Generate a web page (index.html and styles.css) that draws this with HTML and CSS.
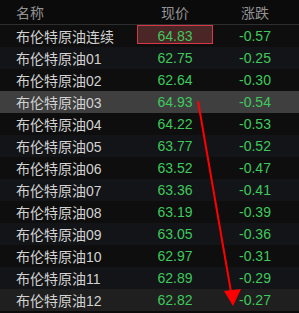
FILE: index.html
```html
<!DOCTYPE html>
<html>
<head>
<meta charset="utf-8">
<link rel="stylesheet" href="styles.css">
</head>
<body>
<div class="table">
  <div class="row head">
    <div class="name">名称</div><div class="price">现价</div><div class="chg">涨跌</div>
  </div>
  <div class="row odd"><div class="name">布伦特原油连续</div><div class="price boxed">64.83</div><div class="chg">-0.57</div></div>
  <div class="row even"><div class="name">布伦特原油01</div><div class="price">62.75</div><div class="chg">-0.25</div></div>
  <div class="row odd"><div class="name">布伦特原油02</div><div class="price">62.64</div><div class="chg">-0.30</div></div>
  <div class="row sel"><div class="name">布伦特原油03</div><div class="price">64.93</div><div class="chg">-0.54</div></div>
  <div class="row odd"><div class="name">布伦特原油04</div><div class="price">64.22</div><div class="chg">-0.53</div></div>
  <div class="row even"><div class="name">布伦特原油05</div><div class="price">63.77</div><div class="chg">-0.52</div></div>
  <div class="row odd"><div class="name">布伦特原油06</div><div class="price">63.52</div><div class="chg">-0.47</div></div>
  <div class="row even"><div class="name">布伦特原油07</div><div class="price">63.36</div><div class="chg">-0.41</div></div>
  <div class="row odd"><div class="name">布伦特原油08</div><div class="price">63.19</div><div class="chg">-0.39</div></div>
  <div class="row even"><div class="name">布伦特原油09</div><div class="price">63.05</div><div class="chg">-0.36</div></div>
  <div class="row odd"><div class="name">布伦特原油10</div><div class="price">62.97</div><div class="chg">-0.31</div></div>
  <div class="row even"><div class="name">布伦特原油11</div><div class="price">62.89</div><div class="chg">-0.29</div></div>
  <div class="row hover"><div class="name">布伦特原油12</div><div class="price">62.82</div><div class="chg">-0.27</div></div>
</div>
<svg class="arrow" width="299" height="313" viewBox="0 0 299 313">
  <line x1="198" y1="101" x2="231" y2="292" stroke="#ff0000" stroke-width="2"/>
  <polygon points="224,291 241,289 233,306" fill="#ff0000"/>
</svg>
</body>
</html>
```
FILE: styles.css
```css
html, body {
  margin: 0;
  padding: 0;
  background: #0b0b0b;
  width: 299px;
  height: 313px;
  overflow: hidden;
}
body {
  position: relative;
  font-family: "Liberation Sans", "Noto Sans CJK SC", sans-serif;
  font-size: 14px;
}
.table {
  display: flex;
  flex-direction: column;
}
.row {
  display: grid;
  grid-template-columns: 137px 76px 84px;
  height: 22px;
  align-items: center;
}
.row.head {
  height: 24px;
  border-bottom: 1px solid #2e2e2e;
  background: #0b0b0b;
}
.row .name {
  padding-left: 16px;
  color: #d2d2d2;
}
.price, .chg {
  text-align: center;
  color: #3ec95c;
}
.row.head .name, .row.head .price, .row.head .chg { color: #939393; }
.odd { background: #0e0e0e; }
.even { background: #131417; }
.sel { background: #3f3f3f; }
.hover { background: #1f1f1f; }
.price.boxed {
  align-self: start;
  box-sizing: border-box;
  height: 19px;
  padding-top: 2px;
  line-height: 16px;
  border: 1px solid #d8374a;
  background: #4a2626;
}
.arrow {
  position: absolute;
  left: 0;
  top: 0;
}
```
